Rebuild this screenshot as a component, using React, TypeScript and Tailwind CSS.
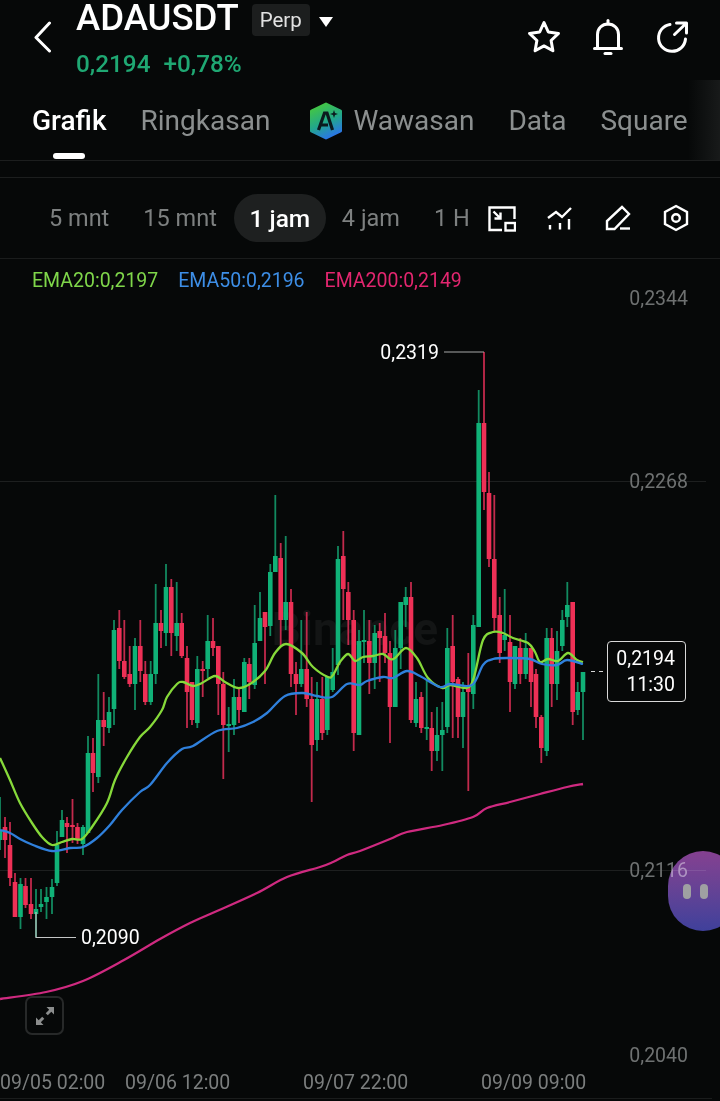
import React from "react";

type C = [number, number, number, number, number, number];
const G = 1, R = 0;
const candles: C[] = [
  [0,797,850,830,840,G],[5,817,858,827,840,R],[10,822,886,845,878,R],[15,873,917,882,917,R],[20.5,878,929,884,917,G],
  [25.5,878,908,886,905,R],[31,878,919,904,914,R],[36,889,937,909,914,G],[41,889,912,904,907,G],[46.5,887,919,897,902,G],
  [52,879,914,887,897,G],[57,831,886,845,883,G],[62,810,837,820,837,G],[67,817,853,823,827,R],[72.5,799,843,825,827,R],
  [77.5,823,844,827,840,R],[83,825,855,827,844,G],[88,736,833,753,833,G],[93,738,792,753,773,R],[98.3,674,783,720,777,G],
  [103.7,692,746,720,727,R],[109,697,733,712,728,G],[114,620,725,630,709,G],[119.3,610,669,628,661,R],[124.3,620,679,661,677,R],
  [129.7,646,687,674,684,R],[135,638,710,646,684,G],[140.3,620,682,646,671,R],[145.3,661,705,674,702,R],[150.7,661,705,674,702,G],
  [155.7,584,684,623,674,G],[161,610,648,623,631,R],[166,564,646,587,633,G],[171.3,579,656,587,633,R],[176.7,582,651,623,636,G],
  [181.7,613,658,623,656,R],[187,646,728,658,692,R],[192,682,725,682,720,R],[197.3,656,728,669,723,G],[202.7,661,697,669,671,R],
  [207.7,615,678,641,669,G],[213,618,656,641,648,R],[218.3,646,715,646,684,R],[223.3,672,779,684,725,R],[228.7,707,752,724,726,G],
  [234,679,735,697,725,G],[239,689,723,697,710,R],[244.3,658,712,662,712,G],[249.3,658,699,664,682,R],[254.7,605,689,643,685,G],
  [260,592,641,618,641,G],[265,612,684,612,627,R],[270.3,564,636,572,626,G],[275.3,495,572,556,572,G],[280.7,543,647,558,620,R],
  [285.7,536,630,602,620,G],[291,589,687,602,674,R],[296,662,715,674,684,R],[301.3,620,687,669,684,G],[306.7,612,707,669,699,R],
  [311.7,677,802,699,745,R],[317,682,751,699,740,G],[322.3,677,740,699,733,R],[327.3,676,735,676,730,G],[332.7,648,692,672,690,G],
  [338,546,675,559,665,G],[343.3,531,620,556,589,R],[348.3,582,645,592,620,R],[353.7,610,751,620,733,R],[359,630,735,641,735,G],
  [364,610,663,640,642,G],[369.3,620,694,641,663,R],[374.7,625,689,633,663,G],[379.7,623,682,631,638,R],[385,613,663,636,653,R],
  [390,641,743,653,707,R],[395.3,630,707,648,707,G],[400.7,602,669,602,648,G],[405.7,587,627,597,605,G],[411,582,723,597,720,R],
  [416,682,727,699,723,G],[421.3,692,733,697,728,R],[426.7,679,740,727,729,G],[431.7,712,771,728,751,R],[437,707,761,735,751,G],
  [442.3,702,771,730,735,G],[447.3,628,733,648,727,G],[452.7,615,738,646,682,R],[458,677,738,679,717,R],[463,682,748,692,717,G],
  [468.3,653,791,687,692,R],[473.3,615,709,625,694,G],[478.7,390,627,423,627,G],[484,352,510,423,492,R],[489,472,567,493,559,R],
  [494.3,495,632,559,618,R],[499.7,597,663,615,653,R],[504.7,589,651,635,640,G],[510,615,712,642,682,R],[515,646,689,646,684,G],
  [520.3,638,684,648,674,R],[525.7,633,679,648,674,G],[531,648,707,648,682,R],[536,669,728,674,717,R],[541.3,715,763,717,748,R],
  [546.7,628,756,638,751,G],[551.7,628,707,638,684,R],[557,631,700,651,684,G],[562.3,610,651,620,646,G],[567.3,582,627,605,617,G],
  [572.7,602,725,602,712,R],[577.7,682,715,692,710,G],[583,672,740,672,692,G],
];

const ema20: [number, number][] = [
  [0,758],[10,780],[20,803],[32,823],[42,837],[52,845],[62,842],[72,839],[82,839],[92,827],[107,803],[115,780],[127,757],[140,737],[150,727],
  [162,710],[167,697],[177,684],[183,682],[193,686],[202,683],[215,676],[225,682],[238,688],[250,684],[265,671],[275,653],[286,644],[302,653],
  [313,667],[328,677],[333,675],[340,662],[348,654],[355,661],[363,657],[373,656],[383,654],[390,659],[395,658],[406,648],[417,658],[428,678],
  [442,688],[450,685],[467,688],[474,677],[483,640],[493,632],[503,633],[513,638],[528,643],[535,652],[540,662],[548,659],[558,661],[568,653],[577,660],[583,662],
];
const ema50: [number, number][] = [
  [0,830],[10,833],[20,839],[33,845],[52,851],[70,848],[83,847],[97,838],[110,825],[122,810],[140,792],[150,785],[167,763],[182,749],[193,746],
  [217,731],[237,728],[253,722],[267,713],[285,696],[303,693],[317,696],[332,697],[347,684],[360,685],[367,681],[383,677],[393,678],[407,671],
  [420,676],[440,687],[450,684],[472,685],[483,665],[493,659],[510,658],[530,659],[542,664],[557,665],[567,660],[583,664],
];
const ema200: [number, number][] = [
  [0,999],[46,992],[83,981],[124,960],[160,939],[190,923],[217,911],[257,893],[287,877],[320,867],[333,862],[347,855],[360,851],[390,839],
  [407,832],[443,825],[473,817],[487,808],[510,802],[540,794],[567,787],[583,784],
];

function smooth(p: [number, number][]): string {
  let d = `M${p[0][0]} ${p[0][1]}`;
  for (let i = 0; i < p.length - 1; i++) {
    const a = p[Math.max(i - 1, 0)], b = p[i], c = p[i + 1], e = p[Math.min(i + 2, p.length - 1)];
    const c1x = b[0] + (c[0] - a[0]) / 6, c1y = b[1] + (c[1] - a[1]) / 6;
    const c2x = c[0] - (e[0] - b[0]) / 6, c2y = c[1] - (e[1] - b[1]) / 6;
    d += ` C${c1x.toFixed(1)} ${c1y.toFixed(1)} ${c2x.toFixed(1)} ${c2y.toFixed(1)} ${c[0]} ${c[1]}`;
  }
  return d;
}

function Chart() {
  return (
    <svg className="absolute inset-0" width={720} height={842} viewBox="0 259 720 842" fontFamily="Roboto, sans-serif">
      <line x1={0} x2={706} y1={481.5} y2={481.5} stroke="#1d1f1f" />
      <line x1={0} x2={706} y1={870.5} y2={870.5} stroke="#1d1f1f" />
      <line x1={0} x2={712} y1={1098.5} y2={1098.5} stroke="#1a1c1c" />
      <text x={438} y={645} textAnchor="end" fontSize={46} fontWeight={700} fill="#131515">Binance</text>
      {candles.map(([x, wt, wb, bt, bb, c], i) => (
        <g key={i}>
          <line x1={x} x2={x} y1={wt} y2={wb} strokeWidth={1.8} stroke={c === G ? "#128a60" : "#c22a4c"} />
          <rect x={x - 2.3} y={bt} width={4.6} height={Math.max(bb - bt, 2)} fill={c === G ? "#10b177" : "#ee3056"} />
        </g>
      ))}
      <path d={smooth(ema200)} fill="none" stroke="#cf2a80" strokeWidth={2.3} />
      <path d={smooth(ema20)} fill="none" stroke="#86d93a" strokeWidth={2.3} />
      <path d={smooth(ema50)} fill="none" stroke="#2f80dc" strokeWidth={2.3} />
      <g fontSize={19.5} fill="#6e7171" textAnchor="end">
        <text x={688} y={304.5}>0,2344</text>
        <text x={688} y={487.5}>0,2268</text>
        <text x={688} y={876.500}>0,2116</text>
        <text x={688} y={1061.5}>0,2040</text>
      </g>
      <g fontSize={19.5} fill="#7b7e7e">
        <text x={0} y={1088.5}>09/05 02:00</text>
        <text x={125} y={1088.5}>09/06 12:00</text>
        <text x={303} y={1088.5}>09/07 22:00</text>
        <text x={481} y={1088.5}>09/09 09:00</text>
      </g>
      <text x={439} y={358.500} textAnchor="end" fontSize={19.5} fill="#ffffff">0,2319</text>
      <line x1={444} x2={484} y1={352} y2={352} stroke="#a5a7a7" strokeWidth={1.2} />
      <path d="M36 912V937.5H76" fill="none" stroke="#c4c6c6" strokeWidth={1.2} />
      <text x={81} y={943.500} fontSize={19.5} fill="#ffffff">0,2090</text>
      <path d="M591 671.5h4M599 671.5h4" stroke="#d5d5d5" strokeWidth={1} />
    </svg>
  );
}

function Star() {
  return (
    <svg width={34} height={34} viewBox="0 0 34 34" fill="none" stroke="#fff" strokeWidth={3} strokeLinejoin="round">
      <path d="M17 2.500L21.300 12L31.500 13.400L24.100 20.500L25.900 30.800L17 25.900L8.100 30.800L9.900 20.500L2.500 13.400L12.700 12Z" />
    </svg>
  );
}
function Bell() {
  return (
    <svg width={34} height={36} viewBox="0 0 34 36" fill="none" stroke="#fff" strokeWidth={3} strokeLinecap="round">
      <path d="M6.5 29V15.5C6.5 9.5 11 5 17 5S27.500 9.500 27.500 15.500V29" />
      <path d="M3.500 29.500H30.500" />
      <path d="M17 1.500V5" />
      <path d="M14 34.500H20" />
    </svg>
  );
}
function Share() {
  return (
    <svg width={34} height={34} viewBox="0 0 34 34" fill="none" stroke="#fff" strokeWidth={3} strokeLinecap="round" strokeLinejoin="round">
      <path d="M15 4.500A13.500 13.500 0 1 0 30.500 19" />
      <path d="M19.500 14.500L31 3.500M21.500 3H31.500V13" />
    </svg>
  );
}
function Back() {
  return (
    <svg width={20} height={32} viewBox="0 0 20 32" fill="none" stroke="#fff" strokeWidth={3} strokeLinecap="round" strokeLinejoin="round">
      <path d="M16.500 2L3 16.500L16.500 30" />
    </svg>
  );
}
function AiLogo() {
  return (
    <svg width={34} height={38} viewBox="0 0 34 38" className="mr-[10px] ml-[5px]">
      <defs>
        <linearGradient id="aig" x1="0.2" y1="0" x2="0.6" y2="1">
          <stop offset="0" stopColor="#46c83e" />
          <stop offset="0.55" stopColor="#22a88a" />
          <stop offset="1" stopColor="#2a76e6" />
        </linearGradient>
      </defs>
      <path d="M17 2L31.500 9V29L17 36L2.500 29V9Z" fill="url(#aig)" stroke="url(#aig)" strokeWidth={3} strokeLinejoin="round" />
      <path d="M9.500 28L15.500 11H18L23.500 28M12.500 23H19" fill="none" stroke="#0b1a1e" strokeWidth={3.2} />
      <path d="M25 8L26 11L29 12L26 13L25 16L24 13L21 12L24 11Z" fill="#0b1a1e" />
    </svg>
  );
}
function IconResize() {
  return (
    <svg width={28} height={28} viewBox="0 0 28 28" fill="none" stroke="#fff" strokeWidth={2.400}>
      <path d="M14 26H1.500V3.500H26.500V15" />
      <rect x={17.500} y={19} width={9.500} height={7.500} />
      <path d="M5.500 7.500L12.500 14.500M12.500 8.500V14.500H6.500" />
    </svg>
  );
}
function IconIndicators() {
  return (
    <svg width={28} height={28} viewBox="0 0 28 28" fill="none" stroke="#fff" strokeWidth={2.400}>
      <path d="M2 14L10 8L16 13L25 4" />
      <path d="M4 21V25.500M14 19V25.500M23 15V25.500" />
    </svg>
  );
}
function IconPencil() {
  return (
    <svg width={28} height={28} viewBox="0 0 28 28" fill="none" stroke="#fff" strokeWidth={2.400}>
      <path d="M3 25V17L18 3L25 10L10.500 25Z" />
      <path d="M16 24.500H26" />
    </svg>
  );
}
function IconHex() {
  return (
    <svg width={28} height={28} viewBox="0 0 28 28" fill="none" stroke="#fff" strokeWidth={2.400}>
      <path d="M14 2L25 8V20L14 26L3 20V8Z" />
      <circle cx={14} cy={14} r={3.800} />
    </svg>
  );
}

export default function App() {
  return (
    <div className="relative flex h-[1101px] w-[720px] flex-col overflow-hidden bg-[#060808] font-['Roboto'] text-white">
      {/* header */}
      <div className="flex h-[80px] items-start pl-[33px] pr-[31px]">
        <div className="mt-[21px] w-[43px]"><Back /></div>
        <div className="flex flex-col">
          <div className="flex h-[40px] items-center">
            <span className="-mt-[4px] text-[36.500px] leading-none font-medium">ADAUSDT</span>
            <span className="ml-[13px] flex h-[32px] w-[58px] items-center justify-center rounded-[4px] bg-[#1c1e1e] text-[20.500px] text-[#e2e2e2]">Perp</span>
            <span className="mt-[4px] ml-[9px] h-0 w-0 border-x-[7px] border-t-[10px] border-x-transparent border-t-white" />
          </div>
          <div className="mt-[9px] flex items-center gap-[13px] text-[24.300px] leading-[30px] font-medium text-[#1fa873]">
            <span>0,2194</span>
            <span>+0,78%</span>
          </div>
        </div>
        <div className="mt-[19px] ml-auto flex items-center gap-[30px]">
          <Star /><Bell /><Share />
        </div>
      </div>

      {/* tabs */}
      <div className="relative flex h-[81px] items-center gap-[34px] border-b border-[#1c1e1e] pl-[32px] pt-[1px] text-[28px] text-[#8b8f8f]">
        <span className="relative font-medium text-white">
          Grafik
          <span className="absolute top-[53px] left-[21px] h-[6px] w-[32px] rounded-full bg-white" />
        </span>
        <span>Ringkasan</span>
        <span className="flex items-center"><AiLogo />Wawasan</span>
        <span>Data</span>
        <span>Square</span>
        <div className="absolute inset-y-0 right-0 w-[32px] bg-gradient-to-r from-transparent to-[#181a1a]" />
      </div>

      <div className="h-[17px] border-b border-[#1c1e1e]" />

      {/* intervals */}
      <div className="flex h-[81px] items-center border-b border-[#1a1c1c] text-[23.500px] text-[#7d8080]">
        <span className="ml-[49px] pt-[2px]">5 mnt</span>
        <span className="ml-[34px] pt-[2px]">15 mnt</span>
        <span className="ml-[17px] flex h-[48px] w-[92px] items-center justify-center rounded-full bg-[#1e2020] pt-[2px] text-[24.500px] font-medium text-white">1 jam</span>
        <span className="ml-[16px] pt-[2px]">4 jam</span>
        <span className="ml-[34px] pt-[2px]">1 H</span>
        <div className="ml-auto mr-[30px] flex items-center gap-[30px]">
          <IconResize /><IconIndicators /><IconPencil /><IconHex />
        </div>
      </div>

      {/* chart */}
      <div className="relative flex-1">
        <Chart />
        <div className="relative flex gap-[20px] pt-[11px] pl-[32px] text-[19.500px] leading-[22px]">
          <span className="text-[#7fd64a]">EMA20:0,2197</span>
          <span className="text-[#3d8ee6]">EMA50:0,2196</span>
          <span className="text-[#e2266f]">EMA200:0,2149</span>
        </div>

        <div className="absolute top-[382px] left-[607px] flex h-[61px] w-[79px] flex-col items-end justify-center rounded-[4px] border border-[#d8d8d8] bg-[#060808] pr-[10px] text-[19.500px] leading-[26px]">
          <span>0,2194</span>
          <span>11:30</span>
        </div>

        <div className="absolute top-[592px] left-[668px] flex h-[80px] w-[70px] items-center gap-[9px] rounded-[36px] bg-gradient-to-b from-[#823a8c] to-[#3a3a98] pl-[15px] mix-blend-screen">
          <span className="h-[15px] w-[8px] rounded-full bg-[#9d9d9f]" />
          <span className="h-[15px] w-[8px] rounded-full bg-[#9d9d9f]" />
        </div>

        <div className="absolute top-[737px] left-[25px] flex h-[39px] w-[39px] items-center justify-center rounded-[7px] border-2 border-[#272929]">
          <svg width={20} height={20} viewBox="0 0 20 20" fill="#8b8d8d">
            <path d="M11.500 1H19V8.500L16.300 5.800L12.800 9.300L10.700 7.200L14.200 3.700Z" />
            <path d="M8.500 19H1V11.500L3.700 14.200L7.200 10.700L9.300 12.800L5.800 16.300Z" />
          </svg>
        </div>
      </div>
    </div>
  );
}
